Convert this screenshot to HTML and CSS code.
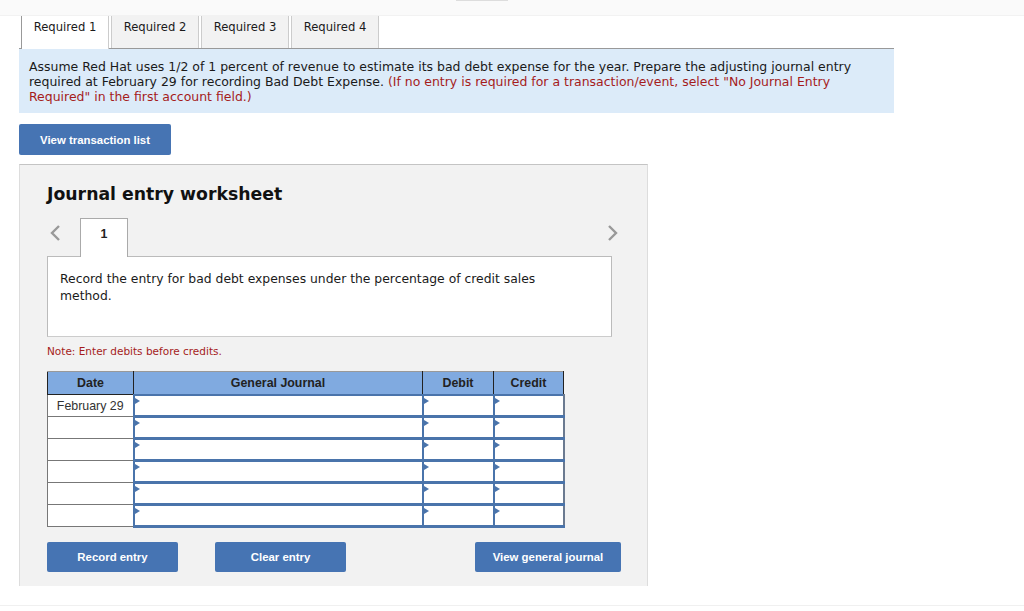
FILE: index.html
```html
<!DOCTYPE html>
<html lang="en">
<head>
  <meta charset="UTF-8" />
  <title>Journal entry worksheet</title>
  <link rel="stylesheet" href="styles.css">
</head>
<body>
  <div class="topbar"><span class="topbar-handle"></span></div>
  <main class="page">
    <div class="tabs">
      <div class="tab active">Required 1</div>
      <div class="tab">Required 2</div>
      <div class="tab">Required 3</div>
      <div class="tab">Required 4</div>
    </div>
    <div class="question">
      Assume Red Hat uses 1/2 of 1 percent of revenue to estimate its bad debt expense for the year. Prepare the adjusting journal entry required at February 29 for recording Bad Debt Expense.
      <span class="red">(If no entry is required for a transaction/event, select "No Journal Entry Required" in the first account field.)</span>
    </div>
    <button class="btn btn-list">View transaction list</button>

    <section class="worksheet">
      <h2>Journal entry worksheet</h2>
      <div class="steps">
        <svg class="arrow" width="12" height="18" viewBox="0 0 12 18"><path d="M10 2 3 9l7 7" /></svg>
        <div class="step">1</div>
        <svg class="arrow arrow-next" width="12" height="18" viewBox="0 0 12 18"><path d="M2 2l7 7-7 7" /></svg>
      </div>
      <div class="prompt">Record the entry for bad debt expenses under the percentage of credit sales method.</div>
      <p class="note">Note: Enter debits before credits.</p>

      <table class="journal">
        <thead>
          <tr><th class="c-date">Date</th><th class="c-acct">General Journal</th><th class="c-num">Debit</th><th class="c-num">Credit</th></tr>
        </thead>
        <tbody>
          <tr><td class="date">February 29</td><td class="field"></td><td class="field"></td><td class="field"></td></tr>
          <tr><td class="date"></td><td class="field"></td><td class="field"></td><td class="field"></td></tr>
          <tr><td class="date"></td><td class="field"></td><td class="field"></td><td class="field"></td></tr>
          <tr><td class="date"></td><td class="field"></td><td class="field"></td><td class="field"></td></tr>
          <tr><td class="date"></td><td class="field"></td><td class="field"></td><td class="field"></td></tr>
          <tr><td class="date"></td><td class="field"></td><td class="field"></td><td class="field"></td></tr>
        </tbody>
      </table>

      <div class="actions">
        <button class="btn btn-action">Record entry</button>
        <button class="btn btn-action btn-clear">Clear entry</button>
        <button class="btn btn-action btn-view">View general journal</button>
      </div>
    </section>
  </main>
  <div class="footer-line"></div>
</body>
</html>
```

FILE: styles.css
```css
* {
  margin: 0;
  padding: 0;
  box-sizing: border-box;
}

body {
  background: #fff;
  color: #1a1a1a;
  font-family: "DejaVu Sans", Verdana, sans-serif;
  font-size: 12.47px;
  height: 611px;
  overflow: hidden;
}

.topbar {
  height: 16px;
  background: #fafafa;
  border-bottom: 1px solid #f2f2f2;
  display: flex;
  justify-content: center;
}

.topbar-handle {
  width: 52px;
  height: 1px;
  background: #ddd;
  margin-left: -60px;
}

.page {
  width: 875px;
  margin-left: 19px;
}

.tabs {
  display: flex;
  gap: 2px;
  height: 33px;
  padding-left: 2px;
  border-bottom: 1px solid #999;
}

.tab {
  width: 88px;
  padding-top: 4px;
  background: #f2f2f2;
  border: 1px solid #ccc;
  border-width: 0 1px;
  font-size: 11.6px;
  line-height: 15px;
  text-align: center;
}

.tab.active {
  height: 33px;
  background: #fff;
  border-left-color: #999;
  position: relative;
}

.question {
  height: 64px;
  padding: 10px 10px 0;
  background: #dcebf9;
  line-height: 15px;
}

.red {
  color: #a51c1c;
}

.btn {
  display: block;
  border: none;
  border-radius: 2px;
  background: #4674b3;
  color: #fff;
  font-family: "Liberation Sans", Arial, sans-serif;
  font-size: 11.4px;
  font-weight: bold;
}

.btn-list {
  width: 152px;
  height: 31px;
  margin-top: 11px;
}

.worksheet {
  width: 629px;
  height: 422px;
  margin-top: 9px;
  padding: 18px 0 0 27px;
  background: #f2f2f2;
  border: 1px solid #ddd;
  border-top-color: #c4c4c4;
  border-bottom: none;
}

.worksheet h2 {
  font-size: 17.3px;
  line-height: 22px;
  color: #111;
}

.steps {
  display: flex;
  align-items: center;
  height: 39px;
  margin-top: 13px;
  width: 564px;
  position: relative;
  z-index: 1;
}

.arrow {
  margin-left: 2px;
  margin-top: -10px;
}

.arrow path {
  fill: none;
  stroke: #999;
  stroke-width: 2.4;
}

.arrow-next {
  margin-left: auto;
  margin-right: -8px;
}

.step {
  width: 48px;
  height: 39px;
  margin-left: 19px;
  padding-top: 8px;
  background: #fff;
  border: 1px solid #aaa;
  border-bottom: none;
  font-family: "Liberation Sans", Arial, sans-serif;
  font-size: 12.4px;
  font-weight: bold;
  line-height: 15px;
  text-align: center;
  color: #222;
}

.prompt {
  width: 565px;
  height: 81px;
  margin-top: -1px;
  padding: 14px 70px 0 12px;
  background: #fff;
  border: 1px solid #bbb;
  border-bottom-color: #ccc;
  font-size: 12.36px;
  line-height: 17px;
}

.note {
  margin-top: 7px;
  font-size: 10.5px;
  line-height: 14px;
  color: #a51c1c;
}

.journal {
  width: 516px;
  margin-top: 13px;
  border-collapse: collapse;
  table-layout: fixed;
  font-family: "Liberation Sans", Arial, sans-serif;
  font-size: 12.4px;
}

.journal th {
  height: 23px;
  background: #80aae0;
  border: 1px solid #222;
  border-top: 1px solid #999;
  color: #222;
}

.c-date {
  width: 86px;
}

.c-acct {
  width: 289px;
}

.c-num {
  width: 71px;
}

.c-num:last-child {
  width: 70px;
}

.journal td {
  height: 22px;
  padding: 0;
  background: #fff;
}

.date {
  border: 1px solid #777;
  text-align: center;
  color: #333;
}

.field {
  border: 2px solid #4a74ab;
  border-bottom-width: 3px;
  position: relative;
}

.field:last-child {
  border-right-color: #6b7a90;
}

.field::before {
  content: "";
  position: absolute;
  top: 2px;
  left: 0;
  border-left: 5px solid #4a74ab;
  border-top: 3px solid transparent;
  border-bottom: 3px solid transparent;
}

.actions {
  display: flex;
  margin-top: 14px;
}

.btn-action {
  width: 131px;
  height: 30px;
}

.btn-clear {
  margin-left: 37px;
}

.btn-view {
  width: 146px;
  margin-left: 129px;
}

.footer-line {
  height: 1px;
  margin-top: 19px;
  background: #f0f0f0;
}
```
